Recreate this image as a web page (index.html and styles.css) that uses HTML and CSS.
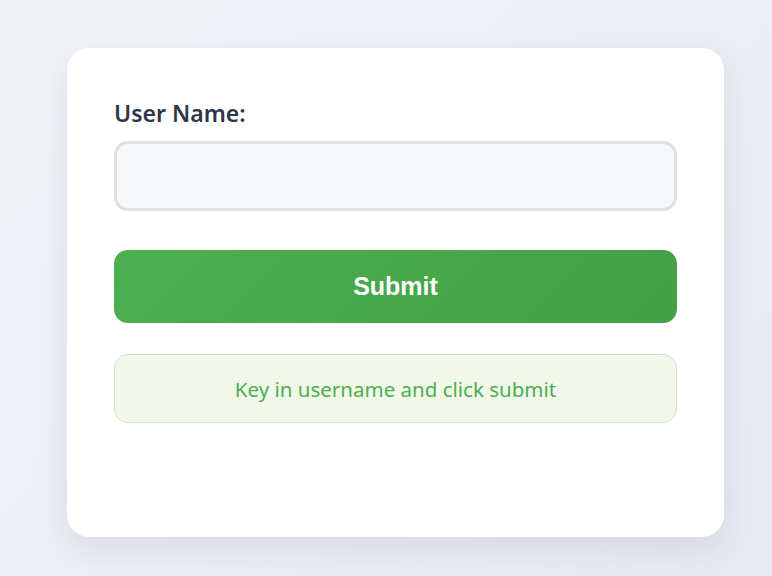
FILE: index.html
```html
<!DOCTYPE html>
<html lang="en">
<head>
<meta charset="utf-8">
<title>User Name</title>
<link rel="stylesheet" href="styles.css">
</head>
<body>
<main class="page">
  <div class="card">
    <label class="label" for="username">User Name:</label>
    <input class="input" id="username" type="text">
    <button class="submit" type="button">Submit</button>
    <div class="message">Key in username and click submit</div>
  </div>
</main>
</body>
</html>
```

FILE: styles.css
```css
* { box-sizing: border-box; }
html, body { margin: 0; height: 100%; }
body {
  background: linear-gradient(135deg, #f1f3f7 0%, #e7eaf3 100%);
  font-family: "Noto Sans", "Open Sans", sans-serif;
}
.page {
  padding: 48px 0 0 67px;
}
.card {
  width: 657px;
  height: 489px;
  background: #fff;
  border-radius: 22px;
  box-shadow: 0 12px 32px rgba(40, 50, 80, 0.10);
  padding: 47px 47px;
  display: flex;
  flex-direction: column;
}
.label {
  font-size: 23px;
  font-weight: 600;
  color: #2d3748;
  line-height: 32px;
  margin-top: 2px;
  margin-bottom: 12px;
}
.input {
  height: 70px;
  width: 100%;
  border: 3px solid #dfe0e2;
  border-radius: 14px;
  background: #f7f8fa;
  font-size: 20px;
  font-family: inherit;
  padding: 0 16px;
  outline: none;
}
.submit {
  margin-top: 39px;
  height: 73px;
  width: 100%;
  border: none;
  border-radius: 14px;
  background: linear-gradient(135deg, #4caf50 0%, #43a047 100%);
  color: #fff;
  font-family: "Liberation Sans", Arial, sans-serif;
  font-weight: 700;
  font-size: 25px;
}
.message {
  margin-top: 31px;
  height: 69px;
  border: 1px solid #c8e6c9;
  border-radius: 14px;
  background: #f1f7e9;
  color: #4caf50;
  font-size: 20.5px;
  display: flex;
  align-items: center;
  justify-content: center;
}
```
